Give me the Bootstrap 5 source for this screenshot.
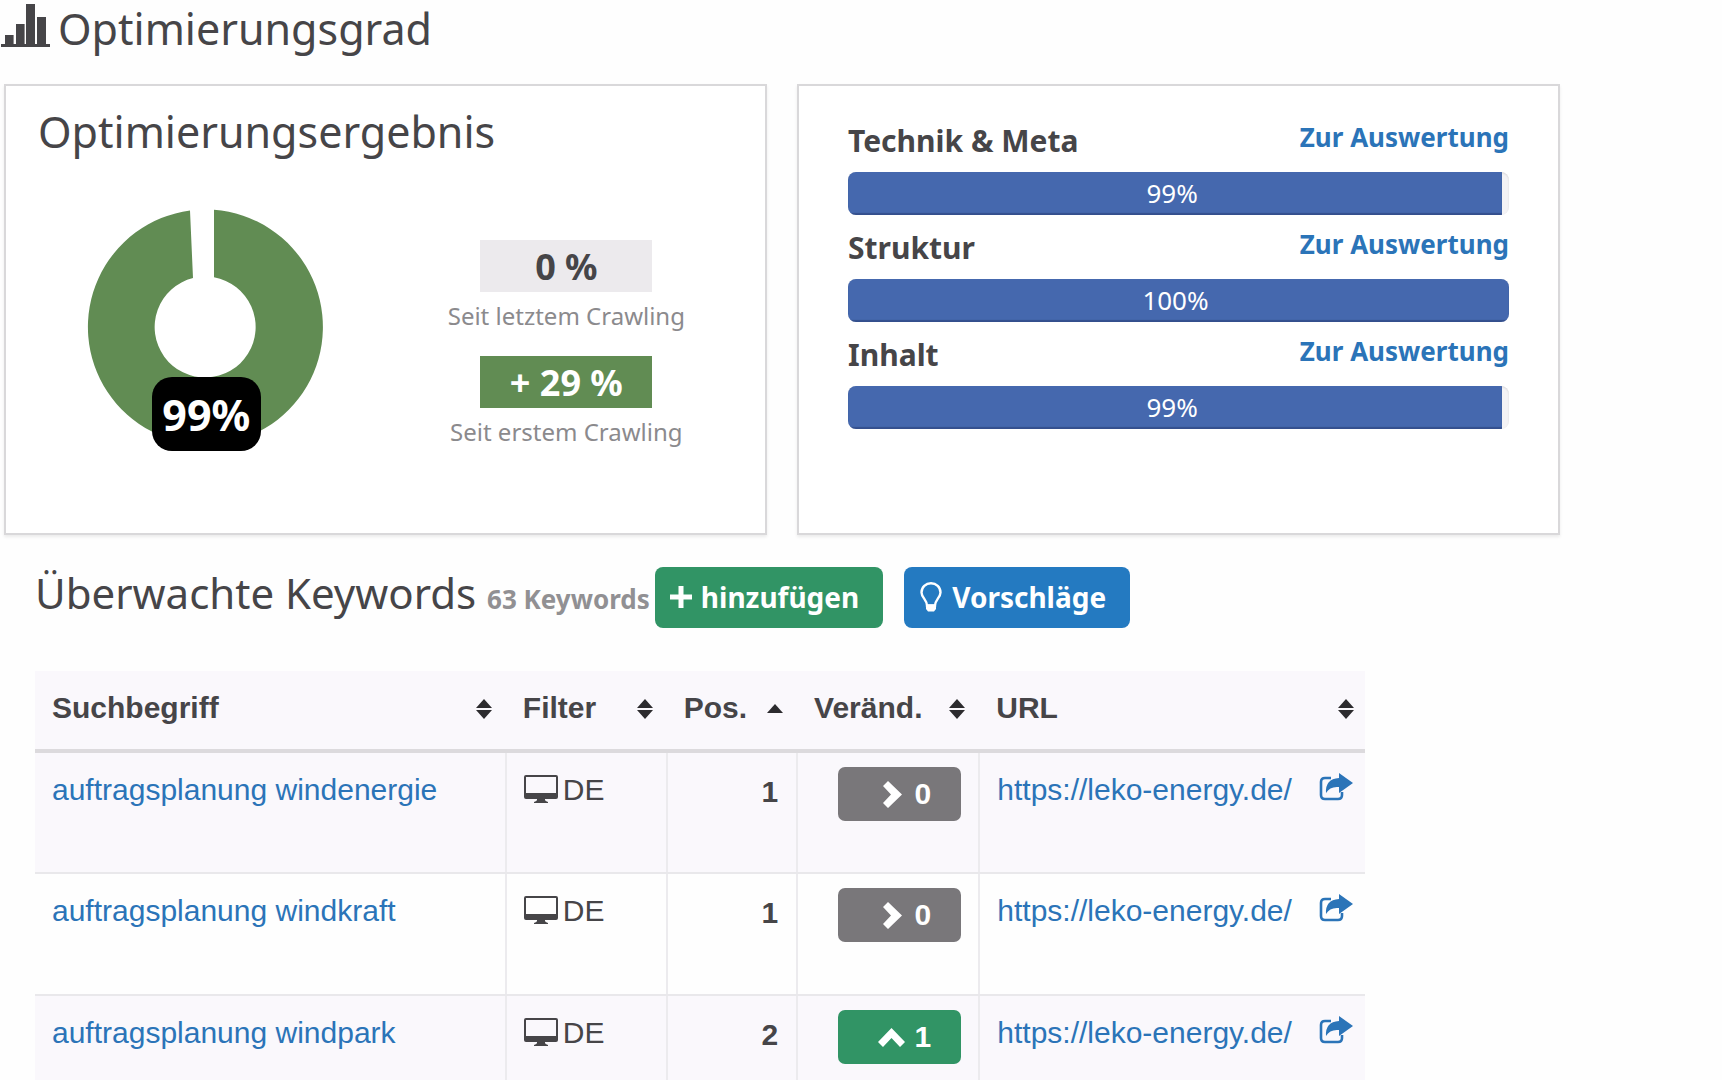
<!DOCTYPE html>
<html lang="de">
<head>
<meta charset="utf-8">
<meta name="viewport" content="width=device-width, initial-scale=1">
<title>Optimierungsgrad</title>
<link href="https://cdn.jsdelivr.net/npm/bootstrap@5.3.0/dist/css/bootstrap.min.css" rel="stylesheet">
<script src="https://cdn.jsdelivr.net/npm/bootstrap@5.3.0/dist/js/bootstrap.bundle.min.js"></script>
<style>
  body { background: #fefefe; color: #464548; font-family: "Noto Sans", sans-serif; }
  a { color: #2b74b8; }
  h1, h2 { font-size: 43px; line-height: 56px; font-weight: 400; }
  .page-wrap { max-width: 1560px; }
  .page-title { gap: 8px; padding: 1px 0 0 1px; margin-bottom: 27px; }
  .page-title svg { margin-top: 3px; }
  .panels { grid-template-columns: 1fr 1fr; gap: 30px; padding-left: 4px; margin-bottom: 30px; }
  .panel { min-height: 451px; background: #fff; border: 2px solid #d9d8da; border-radius: 0; box-shadow: 0 2px 3px rgba(0,0,0,.08); }
  .panel-result { padding: 18px 4px 0 32px; }
  .panel-bars { padding: 35px 49px 0; }
  .result-row { margin-top: 49px; }
  .donut-col { flex: 6 6 0; }
  .stat-col { flex: 7 7 0; padding-top: 31px; }
  .donut-label { left: 65px; top: 168px; width: 109px; height: 74px; border-radius: 20px; background: #000; color: #fff; font-size: 43px; line-height: 76px; }
  .stat-box { width: 172px; height: 52px; font-size: 36px; line-height: 54px; margin-bottom: 8px; background: #eceaed; }
  .stat-up { background: #618c53; color: #fff; }
  .stat-note { font-size: 24px; line-height: 32px; color: #8b8a8d; margin-bottom: 24px; }
  .bar-title { font-size: 30px; line-height: 40px; }
  .bar-link { font-size: 26px; line-height: 32px; }
  .bar-head { margin-bottom: 11px; }
  .progress { height: 43px; border-radius: 8px; background: #f4f3f5; font-size: 26px; margin-bottom: 13px; box-shadow: inset 0 1px 2px rgba(0,0,0,.12); }
  .progress-bar { padding-right: 6px; background: #4568ae; box-shadow: inset 0 -2px 1px rgba(20,35,80,.35); }
  .keywords { padding-left: 35px; }
  .keywords h2 { font-size: 42px; }
  .kw-count { font-size: 26px; font-weight: 700; color: #919093; }
  .kw-btn { height: 61px; margin-top: 2px; padding: 0 24px 2px 14px; border-radius: 8px; font-size: 28px; font-weight: 700; color: #fff; gap: 8px; }
  .btn-add, .btn-add:hover { background: #319465; color: #fff; margin-left: 5px; }
  .btn-tips, .btn-tips:hover { background: #247ac1; color: #fff; margin-left: 21px; }
  .kw-table { width: calc(100% - 195px); margin: 43px 0 0; table-layout: fixed; font-family: "Liberation Sans", sans-serif; font-size: 30px; line-height: 36px; }
  .kw-table th, .kw-table td { color: #464548; }
  .kw-table thead th { padding: 19px 14px 23px 17px; background: #faf8fc; border-bottom: 4px solid #dcdadd; }
  .kw-table thead th:last-child { padding-right: 11px; }
  .kw-table thead svg { margin-top: 2px; }
  .kw-table tbody td { height: 122px; padding: 19px 17px; border-bottom: 2px solid #e9e8eb; border-right: 2px solid #ecebee; }
  .kw-table tbody td:last-child { border-right: 0; padding-right: 12px; }
  .kw-table tbody tr:nth-child(odd) td { background: #faf8fc; box-shadow: none; }
  .kw-table tbody tr:nth-child(even) td { background: #fefefe; box-shadow: none; }
  .kw-table tbody td.pos-cell { padding-top: 21px; padding-right: 18px; font-weight: 700; }
  .kw-table tbody td.delta-cell { padding-top: 14px; }
  .device { gap: 5px; }
  .device svg { margin-top: 3px; }
  .open-link svg { margin-top: 1px; }
  .delta { width: 123px; height: 54px; padding-right: 30px; gap: 10px; border-radius: 7px; background: #79777a; color: #fff; font-weight: 700; line-height: 54px; }
  .delta-up { background: #319465; }
</style>
</head>
<body>
<svg width="0" height="0" class="position-absolute" aria-hidden="true">
  <defs>
    <symbol id="sort-both" viewBox="0 0 16 20"><path fill="#2c2b2e" d="M8 0l8 9H0zM8 20l8-9H0z"/></symbol>
    <symbol id="sort-asc" viewBox="0 0 16 20"><path fill="#2c2b2e" d="M8 5l8 9H0z"/></symbol>
    <symbol id="monitor" viewBox="0 0 34 28"><path fill="#464548" fill-rule="evenodd" d="M2 0h30a2 2 0 0 1 2 2v20a2 2 0 0 1-2 2H21v1q0 1 3 2v1H10v-1q3-1 3-2v-1H2a2 2 0 0 1-2-2V2a2 2 0 0 1 2-2zM2 2v16h30V2z"/></symbol>
    <symbol id="share" viewBox="0 0 34 28"><path fill="none" stroke="#2b74b8" stroke-width="2.600" d="M12 5H6Q2 5 2 9v13q0 4 4 4h13q4 0 4-4v-3"/><path fill="#2b74b8" d="M20 0l14 10-14 10v-6q-9-1-13 6Q6 6 20 5z"/></symbol>
    <symbol id="chev-right" viewBox="0 0 22 27"><path fill="#fff" d="M5 0l14 13.500L5 27 0 22l8-8.500L0 5z"/></symbol>
    <symbol id="chev-up" viewBox="0 0 27 19"><path fill="#fff" d="M0 14L13.500 0 27 14l-5 5-8.500-9L5 19z"/></symbol>
  </defs>
</svg>
<div class="page-wrap">
  <h1 class="page-title d-flex align-items-start">
    <svg width="49" height="44" viewBox="0 0 49 44" aria-hidden="true"><path fill="#464548" d="M0 40h4v-9h8.600v9H15V20h8.600v20H25V0h9v40h2V13h9v27h4v3H0z"/></svg>
    <span>Optimierungsgrad</span>
  </h1>

  <div class="panels d-grid">
    <section class="card panel panel-result">
      <h2 class="mb-0">Optimierungsergebnis</h2>
      <div class="result-row d-flex">
        <div class="donut-col d-flex justify-content-center align-items-start">
          <div class="position-relative">
            <svg class="d-block" width="236" height="236" viewBox="0 0 236 236" aria-hidden="true"><path fill="#618c53" d="M127 .8A117.500 117.500 0 1 1 103 1.500L106 69A50.500 50.500 0 1 0 127 68.300z"/></svg>
            <div class="donut-label position-absolute text-center fw-bold">99%</div>
          </div>
        </div>
        <div class="stat-col d-flex flex-column align-items-center">
          <div class="stat-box text-center fw-bold">0 %</div>
          <div class="stat-note">Seit letztem Crawling</div>
          <div class="stat-box stat-up text-center fw-bold">+ 29 %</div>
          <div class="stat-note">Seit erstem Crawling</div>
        </div>
      </div>
    </section>

    <section class="card panel panel-bars">
      <div class="bar-head d-flex justify-content-between align-items-start">
        <span class="bar-title fw-bold">Technik &amp; Meta</span>
        <a class="bar-link fw-bold text-decoration-none" href="#">Zur Auswertung</a>
      </div>
      <div class="progress"><div class="progress-bar" style="width:99%">99%</div></div>
      <div class="bar-head d-flex justify-content-between align-items-start">
        <span class="bar-title fw-bold">Struktur</span>
        <a class="bar-link fw-bold text-decoration-none" href="#">Zur Auswertung</a>
      </div>
      <div class="progress"><div class="progress-bar" style="width:100%">100%</div></div>
      <div class="bar-head d-flex justify-content-between align-items-start">
        <span class="bar-title fw-bold">Inhalt</span>
        <a class="bar-link fw-bold text-decoration-none" href="#">Zur Auswertung</a>
      </div>
      <div class="progress"><div class="progress-bar" style="width:99%">99%</div></div>
    </section>
  </div>

  <section class="keywords">
    <div class="d-flex align-items-start">
      <h2 class="mb-0">Überwachte Keywords <span class="kw-count">63 Keywords</span></h2>
      <button type="button" class="btn btn-add kw-btn d-flex align-items-center border-0">
        <svg width="24" height="24" viewBox="0 0 24 24" aria-hidden="true"><path fill="#fff" d="M9.500 1h5v8.500H23v5h-8.500V23h-5v-8.500H1v-5h8.500z"/></svg>
        hinzufügen
      </button>
      <button type="button" class="btn btn-tips kw-btn d-flex align-items-center border-0">
        <svg width="26" height="30" viewBox="0 0 26 30" aria-hidden="true"><path fill="none" stroke="#fff" stroke-width="2.400" d="M9 23.500C9 18 3.500 15.500 3.500 10.500a9.500 9.300 0 0 1 19 0C22.500 15.500 17 18 17 23.500z"/><path fill="#fff" d="M8 22.500h10v4.500l-2 2.500h-6L8 27z"/></svg>
        Vorschläge
      </button>
    </div>

    <table class="table kw-table">
      <colgroup><col style="width:35.4%"><col style="width:12.1%"><col style="width:9.8%"><col style="width:13.7%"><col style="width:29%"></colgroup>
      <thead>
        <tr>
          <th scope="col"><div class="d-flex justify-content-between align-items-center">Suchbegriff<svg width="16" height="20" aria-hidden="true"><use href="#sort-both"/></svg></div></th>
          <th scope="col"><div class="d-flex justify-content-between align-items-center">Filter<svg width="16" height="20" aria-hidden="true"><use href="#sort-both"/></svg></div></th>
          <th scope="col"><div class="d-flex justify-content-between align-items-center">Pos.<svg width="16" height="20" aria-hidden="true"><use href="#sort-asc"/></svg></div></th>
          <th scope="col"><div class="d-flex justify-content-between align-items-center">Veränd.<svg width="16" height="20" aria-hidden="true"><use href="#sort-both"/></svg></div></th>
          <th scope="col"><div class="d-flex justify-content-between align-items-center">URL<svg width="16" height="20" aria-hidden="true"><use href="#sort-both"/></svg></div></th>
        </tr>
      </thead>
      <tbody>
        <tr>
          <td><a class="text-decoration-none" href="#">auftragsplanung windenergie</a></td>
          <td><div class="device d-flex"><svg width="34" height="28" aria-hidden="true"><use href="#monitor"/></svg>DE</div></td>
          <td class="pos-cell text-end">1</td>
          <td class="delta-cell"><div class="delta d-flex align-items-center justify-content-end ms-auto"><svg width="22" height="27" aria-hidden="true"><use href="#chev-right"/></svg>0</div></td>
          <td><div class="d-flex justify-content-between"><a class="text-decoration-none" href="#">https://leko-energy.de/</a><a href="#" aria-label="Öffnen" class="open-link d-flex"><svg width="34" height="28" aria-hidden="true"><use href="#share"/></svg></a></div></td>
        </tr>
        <tr>
          <td><a class="text-decoration-none" href="#">auftragsplanung windkraft</a></td>
          <td><div class="device d-flex"><svg width="34" height="28" aria-hidden="true"><use href="#monitor"/></svg>DE</div></td>
          <td class="pos-cell text-end">1</td>
          <td class="delta-cell"><div class="delta d-flex align-items-center justify-content-end ms-auto"><svg width="22" height="27" aria-hidden="true"><use href="#chev-right"/></svg>0</div></td>
          <td><div class="d-flex justify-content-between"><a class="text-decoration-none" href="#">https://leko-energy.de/</a><a href="#" aria-label="Öffnen" class="open-link d-flex"><svg width="34" height="28" aria-hidden="true"><use href="#share"/></svg></a></div></td>
        </tr>
        <tr>
          <td><a class="text-decoration-none" href="#">auftragsplanung windpark</a></td>
          <td><div class="device d-flex"><svg width="34" height="28" aria-hidden="true"><use href="#monitor"/></svg>DE</div></td>
          <td class="pos-cell text-end">2</td>
          <td class="delta-cell"><div class="delta delta-up d-flex align-items-center justify-content-end ms-auto"><svg width="27" height="19" aria-hidden="true"><use href="#chev-up"/></svg>1</div></td>
          <td><div class="d-flex justify-content-between"><a class="text-decoration-none" href="#">https://leko-energy.de/</a><a href="#" aria-label="Öffnen" class="open-link d-flex"><svg width="34" height="28" aria-hidden="true"><use href="#share"/></svg></a></div></td>
        </tr>
      </tbody>
    </table>
  </section>
</div>
</body>
</html>
